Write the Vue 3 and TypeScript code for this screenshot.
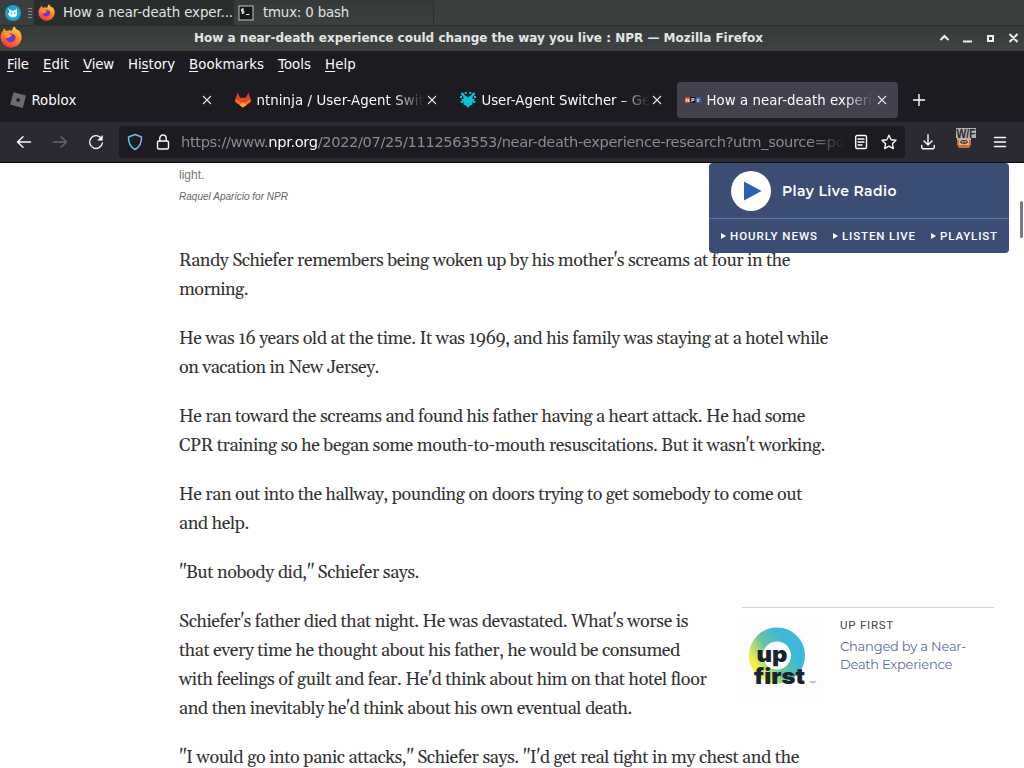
<script setup lang="ts">
import { ref } from "vue";
import type { Directive } from "vue";

interface Line {
    text: string;
    width: number;
}

interface Tab {
    id: "roblox" | "gitlab" | "addon" | "npr";
    title: string;
    width: number;
}

// Spread the letters of a text run so that it takes the given width
const vFit: Directive<HTMLElement, number> = {
    mounted(el, binding) {
        const count = el.textContent?.trim().length ?? 0;
        if (!count) return;
        const natural = el.getBoundingClientRect().width;
        el.style.letterSpacing = `${(binding.value - natural) / count}px`;
    },
};

const activeTab = ref<Tab["id"]>("npr");

const menus = [
    { key: "F", before: "", after: "ile", width: 22 },
    { key: "E", before: "", after: "dit", width: 26 },
    { key: "V", before: "", after: "iew", width: 31 },
    { key: "s", before: "Hi", after: "tory", width: 47 },
    { key: "B", before: "", after: "ookmarks", width: 75 },
    { key: "T", before: "", after: "ools", width: 33 },
    { key: "H", before: "", after: "elp", width: 31 },
];

const tabs: Tab[] = [
    { id: "roblox", title: "Roblox", width: 45 },
    { id: "gitlab", title: "ntninja / User-Agent Switc", width: 175 },
    { id: "addon", title: "User-Agent Switcher – Get", width: 174 },
    { id: "npr", title: "How a near-death experie", width: 174 },
];

const intro: Line[][] = [
    [
        {
            text: "Randy Schiefer remembers being woken up by his mother's screams at four in the",
            width: 611,
        },
        { text: "morning.", width: 69 },
    ],
    [
        {
            text: "He was 16 years old at the time. It was 1969, and his family was staying at a hotel while",
            width: 649,
        },
        { text: "on vacation in New Jersey.", width: 200 },
    ],
    [
        {
            text: "He ran toward the screams and found his father having a heart attack. He had some",
            width: 626,
        },
        {
            text: "CPR training so he began some mouth-to-mouth resuscitations. But it wasn't working.",
            width: 646,
        },
    ],
    [
        {
            text: "He ran out into the hallway, pounding on doors trying to get somebody to come out",
            width: 623,
        },
        { text: "and help.", width: 70 },
    ],
    [{ text: "\"But nobody did,\" Schiefer says.", width: 240 }],
];

const besideAside: Line[] = [
    {
        text: "Schiefer's father died that night. He was devastated. What's worse is",
        width: 509,
    },
    {
        text: "that every time he thought about his father, he would be consumed",
        width: 501,
    },
    {
        text: "with feelings of guilt and fear. He'd think about him on that hotel floor",
        width: 527,
    },
    {
        text: "and then inevitably he'd think about his own eventual death.",
        width: 453,
    },
];

const lastLine: Line = {
    text: "\"I would go into panic attacks,\" Schiefer says. \"I'd get real tight in my chest and the",
    width: 620,
};

const radioLinks = [
    { label: "HOURLY NEWS", width: 88 },
    { label: "LISTEN LIVE", width: 74 },
    { label: "PLAYLIST", width: 58 },
];
</script>

<template>
    <div class="screen">
        <svg width="0" height="0" class="defs">
            <defs>
                <linearGradient id="fox" x1="0.8" y1="0" x2="0.3" y2="1">
                    <stop offset="0" stop-color="#ffe04a" />
                    <stop offset="0.45" stop-color="#ff8a25" />
                    <stop offset="1" stop-color="#f5304d" />
                </linearGradient>
                <symbol id="firefox" viewBox="0 0 20 20">
                    <path
                        fill="url(#fox)"
                        d="M3 4.2 3.6 2l2.2 2.5c1-.5 1.8-.7 2.7-.7L11 4.4C11 2.5 12 1 13.2.2c.2 1.5 1.5 2.4 2.9 3.7l1-.1c2.2 2.4 2.9 5.3 2.4 8.2A9.6 9.6 0 0 1 .5 10.6C.4 8 1.2 5.8 3 4.2z"
                    />
                    <path
                        fill="#7139c8"
                        d="M7.4 7.6c2.200-1.400 6-.7 6.700 2.100.6 2.800-1.600 5-4.200 5s-4.600-1.900-4.600-4.200c1.200.8 2.500.5 3.200-.4.7-.7 1.500-.9 2.200-1-.8-1.100-2-1.500-3.300-1.500z"
                    />
                    <path
                        fill="#ff9640"
                        d="M3.600 6.400c1.700-.7 3.400-.2 4.600.9l2.500.8c-.3 1-1.800 1.200-2.200 1.900-.5 1-1.700 1.300-3 .7z"
                    />
                </symbol>
            </defs>
        </svg>

        <div class="panel">
            <svg class="launcher" width="18" height="18" viewBox="0 0 18 18">
                <circle cx="9" cy="9" r="8" fill="#19a5cf" />
                <path
                    fill="#fff"
                    d="M4.200 4.200 7.500 6.800 11 6.200l2.300-2-.7 3c1.500 2.500.2 6.100-3.200 6.300-3.100.1-5.300-1.700-5.200-4.200l1.500-.8z"
                />
                <path
                    stroke="#19a5cf"
                    stroke-width="1.200"
                    d="m7 9 1.200 1M11.200 8.500l-1 1.300"
                />
            </svg>
            <span class="grip"><i></i><i></i><i></i><i></i></span>
            <div class="task task-active">
                <svg width="17" height="17"><use href="#firefox" /></svg>
                <span v-fit="170">How a near-death exper...</span>
            </div>
            <div class="task">
                <svg width="16" height="16" viewBox="0 0 16 16">
                    <rect
                        x="1"
                        y="1"
                        width="14"
                        height="14"
                        fill="#15191a"
                        stroke="#c4c8c6"
                    />
                    <path
                        d="M5.800 4.200H3.600v1.900h2.200V8H3.500M4.700 3.300v5.500M8 9.500h3.500"
                        fill="none"
                        stroke="#f5f5f5"
                    />
                </svg>
                <span v-fit="86">tmux: 0 bash</span>
            </div>
        </div>

        <div class="titlebar">
            <svg class="title-icon" width="22" height="22">
                <use href="#firefox" />
            </svg>
            <strong v-fit="569"
                >How a near-death experience could change the way you live : NPR
                — Mozilla Firefox</strong
            >
            <svg
                class="window-buttons"
                width="84"
                height="20"
                viewBox="0 0 84 20"
                fill="none"
                stroke="#eeeeec"
                stroke-width="2"
            >
                <path d="m4.500 12 4-4 4 4M27 13.500h9M73.500 6l8 8M81.500 6l-8 8" />
                <rect x="52" y="8" width="5" height="5" />
            </svg>
        </div>

        <nav class="menubar">
            <span v-for="menu in menus" :key="menu.after" v-fit="menu.width"
                >{{ menu.before }}<u>{{ menu.key }}</u
                >{{ menu.after }}</span
            >
        </nav>

        <div class="tabstrip">
            <div
                v-for="tab in tabs"
                :key="tab.id"
                class="tab"
                :class="{ active: tab.id === activeTab }"
                @click="activeTab = tab.id"
            >
                <svg
                    v-if="tab.id === 'roblox'"
                    width="16"
                    height="16"
                    viewBox="0 0 16 16"
                >
                    <path
                        fill="#6c6c70"
                        fill-rule="evenodd"
                        d="M3.500.2 16 3.400 12.800 16 .2 12.600zM7 6.100 6.200 9.300l3.100.8.8-3.200z"
                    />
                </svg>
                <svg
                    v-else-if="tab.id === 'gitlab'"
                    width="16"
                    height="16"
                    viewBox="0 0 16 16"
                >
                    <path
                        fill="#e24329"
                        d="m8 15.500 7-5.200c.9-.7 1.100-1.700.8-2.600L13.300.8 11 5.800H5L2.700.8.2 7.700c-.3 1 0 2 .8 2.600z"
                    />
                    <path
                        fill="#fc6d26"
                        d="M8 15.500 1 10.300C.2 9.700 0 8.700.2 7.700l2 .1L8 12l5.800-4.200 2-.1c.3 1 0 2-.8 2.600z"
                    />
                    <path fill="#fca326" d="m8 9.800 3.500 3.100L8 15.500l-3.500-2.600z" />
                </svg>
                <svg
                    v-else-if="tab.id === 'addon'"
                    width="16"
                    height="16"
                    viewBox="0 0 16 16"
                    fill="#08c4d2"
                >
                    <path
                        d="M3.500 4.500h3L8 5.500l1.500-1h3v2.500H15L12.500 10v2.500L10 13.500 8 16l-2-2.500-2.500-1V10L1 7h2.500z"
                    />
                    <path
                        d="M1 .7h2.700v2.500H1zM4.700 0h2v2h-2zM9.300 0h2v2h-2zM12.300.7H15v2.500h-2.700zM0 4h2v2H0zM14 4h2v2h-2zM.7 9h2.300v2H.7zM13 9h2.300v2H13z"
                    />
                    <path d="m2 2 4 3.500M14 2l-4 3.500" stroke="#08c4d2" stroke-width="2" />
                </svg>
                <svg v-else width="16" height="16" viewBox="0 0 16 16">
                    <rect y="5.200" width="5.300" height="5.500" fill="#d5533b" />
                    <rect
                        x="5.300"
                        y="5.200"
                        width="5.300"
                        height="5.500"
                        fill="#080808"
                    />
                    <rect
                        x="10.600"
                        y="5.200"
                        width="5.400"
                        height="5.500"
                        fill="#3366ad"
                    />
                    <g class="favicon-letters">
                        <text x="0.700" y="9.800">n</text>
                        <text x="5.900" y="9.300">p</text>
                        <text x="11.900" y="9.800">r</text>
                    </g>
                </svg>
                <span class="tab-title" :class="{ faded: tab.width > 168 }">
                    <span v-fit="tab.width">{{ tab.title }}</span>
                </span>
                <svg class="tab-close" width="16" height="16" viewBox="0 0 16 16">
                    <path
                        d="m4 4 8 8M12 4l-8 8"
                        stroke="#e6e6e9"
                        stroke-width="1.100"
                    />
                </svg>
            </div>
            <svg class="new-tab" width="14" height="14" viewBox="0 0 14 14">
                <path d="M7 1v12M1 7h12" stroke="#fbfbfe" stroke-width="1.400" />
            </svg>
        </div>

        <div class="toolbar">
            <svg class="tool" viewBox="0 0 16 16">
                <path d="M14.500 8H1.800M7 2.800 1.500 8 7 13.200" />
            </svg>
            <svg class="tool disabled" viewBox="0 0 16 16">
                <path d="M1.500 8h12.700M9 2.800 14.500 8 9 13.200" />
            </svg>
            <svg class="tool" viewBox="0 0 16 16">
                <path d="M13.400 4.500A6.400 6.400 0 1 0 14.400 9" />
                <path d="M14.700 1v5.500H9.200z" fill="#fbfbfe" stroke="none" />
            </svg>
            <div class="urlbar">
                <svg class="shield" width="16" height="18" viewBox="0 0 16 18">
                    <defs>
                        <linearGradient id="shield" x1="0" y1="1" x2="1" y2="0">
                            <stop offset="0" stop-color="#35d5ef" />
                            <stop offset="1" stop-color="#a6a1e8" />
                        </linearGradient>
                    </defs>
                    <path
                        d="M8 1.500 14.500 4c.2 6-1.700 10-6.500 12.500C3.200 14 1.300 10 1.500 4z"
                        fill="none"
                        stroke="url(#shield)"
                        stroke-width="1.500"
                        stroke-linejoin="round"
                    />
                </svg>
                <svg class="tool lock" viewBox="0 0 16 16">
                    <rect x="2.500" y="7" width="11" height="8" rx="1.500" />
                    <path d="M4.800 7V4.200a3.200 3.200 0 0 1 6.400 0V7" />
                </svg>
                <div class="url">
                    <span v-fit="672"
                        >https://www.<b>npr.org</b>/2022/07/25/1112563553/near-death-experience-research?utm_source=pod</span
                    >
                </div>
                <svg class="tool" viewBox="0 0 16 16">
                    <rect x="2.700" y="1.500" width="10.800" height="13" rx="1.500" />
                    <path d="M5 5h6M5 8h6M5 11h4" />
                </svg>
                <svg class="tool star" viewBox="0 0 16 16">
                    <path
                        d="m8 1.200 2.100 4.500 4.900.6-3.600 3.400.9 4.900L8 12.200l-4.300 2.400.9-4.900L1 6.300l4.900-.6z"
                    />
                </svg>
            </div>
            <svg class="tool download" viewBox="0 0 16 16">
                <path
                    d="M8 .8v10M4 7l4 4 4-4M1.700 11.500v1.700a1.500 1.500 0 0 0 1.500 1.500h9.600a1.500 1.500 0 0 0 1.500-1.500v-1.700"
                />
            </svg>
            <svg class="extension" width="22" height="24" viewBox="0 0 22 24">
                <path fill="#c9703a" d="M2 11h14v8l-2 3H4l-2-3z" />
                <path fill="#e6b98a" d="M4 14h10v5H4z" />
                <path
                    d="M5.500 16c1.500-2.500 5.500-2.500 7 0-1.500 2-5.500 2-7 0zM9 14v4"
                    fill="none"
                    stroke="#5a4632"
                    stroke-width="1.300"
                />
                <path fill="#b2b2b2" d="M1 2h20v10h-5v2H2v-2H1z" />
                <text x="1.500" y="11.500" textLength="19" lengthAdjust="spacingAndGlyphs">
                    W/F
                </text>
            </svg>
            <svg class="tool hamburger" viewBox="0 0 16 16">
                <path d="M2.500 3.500h11M2.500 8h11M2.500 12.500h11" />
            </svg>
        </div>

        <main class="page">
            <article>
                <p class="caption">light.</p>
                <p class="credit"><span v-fit="109">Raquel Aparicio for NPR</span></p>
                <div class="story">
                    <p v-for="(lines, i) in intro" :key="i">
                        <span v-for="line in lines" :key="line.text" class="line">
                            <span v-fit="line.width">{{ line.text }}</span>
                        </span>
                    </p>
                    <div class="with-aside">
                        <p>
                            <span
                                v-for="line in besideAside"
                                :key="line.text"
                                class="line"
                            >
                                <span v-fit="line.width">{{ line.text }}</span>
                            </span>
                        </p>
                        <aside>
                            <svg width="82" height="82" viewBox="0 0 82 82">
                                <defs>
                                    <linearGradient
                                        id="ring"
                                        x1="0"
                                        y1="0.75"
                                        x2="0.75"
                                        y2="0.25"
                                    >
                                        <stop offset="0" stop-color="#f5ef45" />
                                        <stop offset="0.5" stop-color="#67c3a6" />
                                        <stop offset="1" stop-color="#3db8d8" />
                                    </linearGradient>
                                </defs>
                                <rect width="82" height="80" fill="#fdfdfd" />
                                <circle
                                    cx="35"
                                    cy="38.500"
                                    r="21"
                                    fill="none"
                                    stroke="url(#ring)"
                                    stroke-width="14"
                                />
                                <g class="logo-text">
                                    <text
                                        x="14.500"
                                        y="45"
                                        textLength="31"
                                        lengthAdjust="spacingAndGlyphs"
                                    >
                                        up
                                    </text>
                                    <text
                                        x="12"
                                        y="67"
                                        textLength="51"
                                        lengthAdjust="spacingAndGlyphs"
                                    >
                                        first
                                    </text>
                                </g>
                                <text class="logo-mark" x="68" y="66">npr</text>
                            </svg>
                            <div class="promo">
                                <h4><span v-fit="54">UP FIRST</span></h4>
                                <a>
                                    <span v-fit="126">Changed by a Near-</span><br />
                                    <span v-fit="112">Death Experience</span>
                                </a>
                            </div>
                        </aside>
                    </div>
                    <p>
                        <span class="line">
                            <span v-fit="lastLine.width">{{ lastLine.text }}</span>
                        </span>
                    </p>
                </div>
            </article>

            <section class="radio">
                <div class="radio-main">
                    <svg width="40" height="40" viewBox="0 0 40 40">
                        <circle cx="20" cy="20" r="20" fill="#fff" />
                        <path d="M13 10.500v19L30.500 20z" fill="#2b60b4" />
                    </svg>
                    <span v-fit="115">Play Live Radio</span>
                </div>
                <div class="radio-links">
                    <a v-for="link in radioLinks" :key="link.label">
                        <svg width="5" height="6" viewBox="0 0 5 6">
                            <path d="M0 0v6l5-3z" fill="#fff" />
                        </svg>
                        <span v-fit="link.width">{{ link.label }}</span>
                    </a>
                </div>
            </section>
            <div class="scroll-thumb"></div>
        </main>
    </div>
</template>

<style>
body {
    margin: 0;
    overflow: hidden;
}
</style>

<style scoped>
.screen {
    width: 1024px;
    height: 768px;
    overflow: hidden;
    display: flex;
    flex-direction: column;
    font-family: "DejaVu Sans", sans-serif;
    font-size: 13.33px;
    color: #fbfbfe;
    background: #fff;
    white-space: nowrap;
}

.screen > * {
    flex: none;
    box-sizing: border-box;
}

.screen svg {
    flex: none;
}

span {
    display: inline-block;
}

.defs {
    position: absolute;
}

/* Desktop panel */
.panel {
    height: 26px;
    display: flex;
    align-items: center;
    background: #3a3f3e;
    border-bottom: 1px solid #292d2c;
    color: #e2e4e3;
}

.launcher {
    margin-left: 4px;
}

.grip {
    display: flex;
    flex-direction: column;
    gap: 2px;
    margin: 0 2px 0 6px;
}

.grip i {
    width: 4px;
    height: 1px;
    background: #888d8b;
}

.task {
    height: 25px;
    width: 200px;
    display: flex;
    align-items: center;
    gap: 9px;
    box-sizing: border-box;
    border-right: 1px solid #2b2f2e;
    padding-left: 4px;
    background: linear-gradient(#343938, #3c4140);
}

.task-active {
    gap: 8px;
    background: #292d2c;
}

/* Window title */
.titlebar {
    height: 25px;
    display: flex;
    align-items: center;
    background: linear-gradient(#363b3a, #3f4342);
    font-size: 12px;
    color: #e4e6e5;
}

.title-icon {
    margin: -3px 172px 0 0;
}

.titlebar strong {
    margin-top: -2px;
}

.window-buttons {
    margin: 0 4px 2px auto;
}

/* Firefox chrome */
.menubar {
    height: 27px;
    display: flex;
    align-items: center;
    gap: 14px;
    padding-left: 7px;
    background: #1c1b22;
}

.menubar u {
    text-underline-offset: 2px;
}

.tabstrip {
    height: 44px;
    display: flex;
    align-items: center;
    gap: 4px;
    padding-left: 2px;
    background: #1c1b22;
}

.tab {
    width: 221px;
    height: 36px;
    box-sizing: border-box;
    display: flex;
    align-items: center;
    padding: 0 8px;
    border-radius: 4px;
}

.tab.active {
    background: #42414d;
}

.tab-title {
    width: 167.6px;
    margin-left: 5.4px;
    overflow: hidden;
}

.tab-title.faded {
    mask-image: linear-gradient(to right, #000 138px, transparent 168px);
}

.favicon-letters {
    font: bold 6px "Liberation Sans", sans-serif;
    fill: #fff;
}

.new-tab {
    margin-left: 10px;
}

.toolbar {
    height: 41px;
    display: flex;
    align-items: center;
    background: #2b2a33;
    border-bottom: 1px solid #0c0c0d;
    padding-left: 16px;
}

.tool {
    width: 16px;
    height: 16px;
    fill: none;
    stroke: #fbfbfe;
    stroke-width: 1.4;
    stroke-linejoin: round;
    stroke-linecap: round;
}

.toolbar > .tool:nth-child(-n + 2) {
    margin-right: 20px;
}

.toolbar > .disabled {
    stroke: #686770;
}

.urlbar {
    width: 786px;
    height: 32px;
    margin-left: 15px;
    display: flex;
    align-items: center;
    box-sizing: border-box;
    padding-left: 8px;
    background: #1c1b22;
    border-radius: 4px;
}

.lock {
    margin: 0 10px 0 12px;
}

.url {
    width: 664px;
    margin: -2px 8px 0 0;
    overflow: hidden;
    font-size: 14.67px;
    color: #8b8a92;
    mask-image: linear-gradient(to right, #000 630px, transparent 664px);
}

.url b {
    font-weight: normal;
    color: #fbfbfe;
}

.star {
    margin-left: 12px;
}

.download {
    margin-left: 15px;
}

.extension {
    margin: -8px 15px 0 19px;
}

.extension text {
    font: bold 12px "Liberation Sans", sans-serif;
    fill: #292929;
}

/* Web page */
.page {
    position: relative;
    height: 605px;
    overflow: hidden;
    background: #fff;
    color: #333;
}

article {
    padding-left: 179px;
}

p,
h4 {
    margin: 0;
}

.caption {
    padding-top: 4px;
    font: 12px/16px "Liberation Sans", Arial, sans-serif;
    color: #767676;
}

.credit {
    margin-top: 6px;
    font: italic 10px/15px "Liberation Sans", Arial, sans-serif;
    color: #666;
}

.story {
    padding-top: 42px;
    font: 18px/29px Georgia, Gelasio, "Liberation Serif", serif;
}

.story p {
    margin-bottom: 20px;
}

.line {
    display: block;
    height: 29px;
}

.with-aside {
    display: flex;
    height: 136px;
}

.with-aside > p {
    width: 563px;
}

aside {
    width: 252px;
    height: 90px;
    display: flex;
    gap: 16px;
    padding-top: 9px;
    border-top: 1px solid #d5d5d5;
}

.logo-text {
    font: 900 22px Inter, sans-serif;
    fill: #17232e;
}

.logo-mark {
    font: 4px "Liberation Sans", sans-serif;
    fill: #777;
}

.promo h4 {
    height: 18px;
    font: 400 11.5px/17px Roboto, sans-serif;
    color: #444;
}

.promo h4 span {
    vertical-align: top;
}

.promo a {
    display: block;
    font: 13px/18px Montserrat, Inter, sans-serif;
    color: #566ba8;
    margin-top: 2px;
}

.promo a span {
    vertical-align: top;
}

.radio {
    position: absolute;
    top: 0;
    right: 15px;
    width: 300px;
    height: 90px;
    background: #3b4d75;
    border-radius: 4px;
    color: #fff;
}

.radio-main {
    height: 55px;
    display: flex;
    align-items: center;
    gap: 11px;
    padding-left: 22px;
    border-bottom: 1px solid #5f77a6;
    font: 600 14px Montserrat, Inter, sans-serif;
}

.radio-links {
    height: 34px;
    display: flex;
    align-items: center;
    gap: 15px;
    padding-left: 12px;
    font: 500 11.5px Roboto, sans-serif;
}

.radio-links a {
    display: flex;
    align-items: center;
    gap: 4px;
}

.scroll-thumb {
    position: absolute;
    top: 38px;
    right: 1px;
    width: 3px;
    height: 37px;
    border-radius: 2px;
    background: #7b7b7b;
}
</style>
